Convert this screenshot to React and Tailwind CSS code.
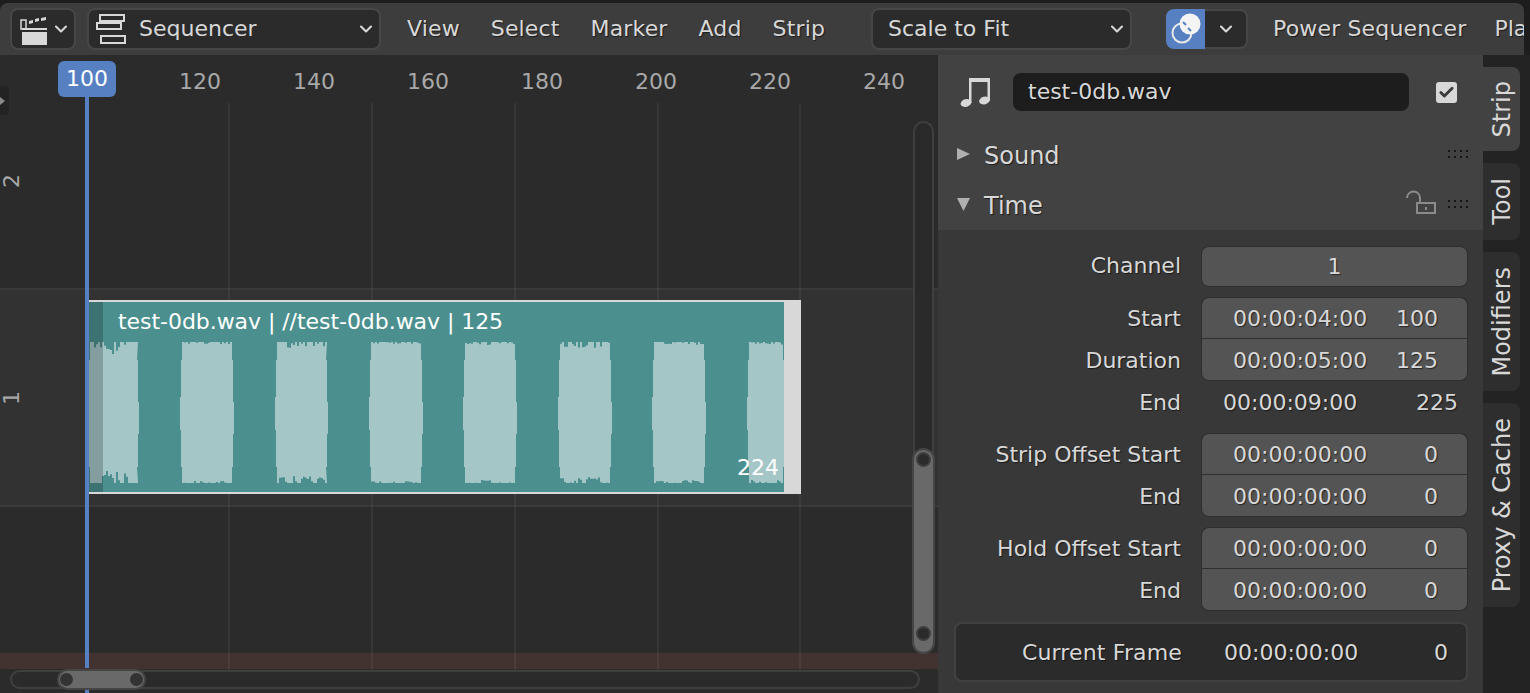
import React from "react";
import { ChevronDown, Check } from "lucide-react";

const shadow = "[text-shadow:1px_1px_1px_rgba(0,0,0,0.55)]";
const ticks = [120, 140, 160, 180, 200, 220, 240];
const gridLines = [228, 371, 514, 657, 799];
const blocks = [
  [1, 50, 12],
  [93, 145, 2],
  [188, 239, 7],
  [282, 334, 2],
  [376, 428, 3],
  [471, 523, 6],
  [565, 617, 3],
  [660, 696, 3],
];

// stepped outline of one sound burst, coordinates are inside the strip body
const burstPath = ([x0, x1, spike], index) => {
  const noise = (n) => Math.abs(Math.sin(n * 12.9898 + index * 78.233) * 43758.5453) % 1;
  const top = [];
  const bottom = [];
  const topY = (x) => (noise(x) > 0.55 ? 40 + noise(x + 3) * spike : 40);
  const bottomY = (x) => (noise(x + 7) > 0.55 ? 181 - noise(x + 9) * spike : 181);
  for (let x = x0 + 1; x < x1 - 1; x += 2) {
    top.push(`L${x} ${topY(x)} L${x + 2} ${topY(x)}`);
    bottom.push(`L${x + 2} ${bottomY(x)} L${x} ${bottomY(x)}`);
  }
  return [
    ...top.map((s, i) => (i === 0 ? s.replace("L", "M") : s)),
    `L${x1 - 1} 58`,
    `L${x1} 58`,
    `L${x1} 100`,
    `L${x1 + 1} 100`,
    `L${x1 + 1} 132`,
    `L${x1} 132`,
    `L${x1} 165`,
    `L${x1 - 1} 165`,
    ...bottom.reverse(),
    `L${x0 + 1} 165`,
    `L${x0} 165`,
    `L${x0} 128`,
    `L${x0 - 1} 128`,
    `L${x0 - 1} 95`,
    `L${x0} 95`,
    `L${x0} 58`,
    `L${x0 + 1} 58`,
    "Z",
  ].join(" ");
};

const Dots = () => (
  <svg width="22" height="10" viewBox="0 0 22 10" className="shrink-0">
    {[0, 6, 12, 18].map((x) =>
      [0, 6].map((y) => <rect key={`${x}-${y}`} x={x} y={y + 1} width="2" height="2" fill="#161616" />)
    )}
  </svg>
);

const Clapper = () => (
  <svg width="28" height="32" viewBox="0 0 28 32">
    <rect x="1" y="7" width="5" height="9" fill="none" stroke="#d8d8d8" strokeWidth="1.5" />
    <path d="M9 8l4-1v3l-4 1zM15 6l4-1v3l-4 1zM21 5l5-1v3l-5 1z" fill="#d8d8d8" />
    <rect x="2" y="15" width="25" height="2" fill="#d8d8d8" />
    <rect x="2" y="19" width="25" height="13" fill="#d8d8d8" />
  </svg>
);

const SequencerIcon = () => (
  <svg width="30" height="30" viewBox="0 0 30 30" fill="none" stroke="#d8d8d8" strokeWidth="2">
    <rect x="4" y="1" width="24" height="6" />
    <rect x="1" y="9" width="24" height="6" />
    <rect x="5" y="22" width="24" height="7" />
  </svg>
);

const OverlayIcon = () => (
  <svg width="32" height="32" viewBox="0 0 32 32">
    <circle cx="12" cy="20" r="9.5" fill="none" stroke="#e8e8e8" strokeWidth="2" />
    <circle cx="20" cy="11" r="10.5" fill="#f4f4f4" />
    <path d="M13 9l3 3M18 15l3 3" stroke="#5680c2" strokeWidth="2" />
  </svg>
);

const MusicIcon = () => (
  <svg width="32" height="30" viewBox="0 0 32 30" fill="#d8d8d8">
    <path d="M10 1h21v23h-2.5V5H12.500v21H10z" />
    <ellipse cx="7" cy="26" rx="5.500" ry="3.800" transform="rotate(-15 7 26)" />
    <ellipse cx="25.500" cy="23.500" rx="5.500" ry="3.800" transform="rotate(-15 25.500 23.500)" />
  </svg>
);

const LockIcon = () => (
  <svg width="30" height="24" viewBox="0 0 30 24" fill="none" stroke="#8a8a8a" strokeWidth="2">
    <path d="M1 8a6.5 6.5 0 0 1 13 0v5" />
    <rect x="11" y="13" width="18" height="10" />
    <rect x="19" y="17" width="2" height="3" fill="#8a8a8a" stroke="none" />
  </svg>
);

const Chevron = () => <ChevronDown size={20} strokeWidth={2.5} color="#d8d8d8" />;

const Dropdown = ({ className, children }) => (
  <div className={`flex h-[42px] items-center rounded-lg border-2 border-[#474747] bg-[#2b2b2b] ${className}`}>
    {children}
  </div>
);

const FieldBlock = ({ rows }) => (
  <div className="flex flex-col">
    {rows.map((row, i) => (
      <div key={row.label} className="flex h-[42px] items-center">
        <div className={`w-[243px] pt-[2px] text-right ${shadow}`}>{row.label}</div>
        <div
          className={`ml-[20px] flex h-full w-[267px] items-center justify-between border-x border-[#2e2e2e] bg-[#545454] pt-[2px] pr-[29px] pl-[31px] ${i === 0 ? "rounded-t-lg border-t border-b border-b-[#303030]" : "rounded-b-lg border-b"} ${shadow}`}
        >
          <span>{row.time}</span>
          <span>{row.frame}</span>
        </div>
      </div>
    ))}
  </div>
);

const TabLabel = ({ active, className, children }) => (
  <div
    className={`flex w-[37px] items-center justify-center rounded-r-lg ${active ? "bg-[#424242]" : "bg-[#2e2e2e]"} ${className}`}
  >
    <span className="rotate-180 text-[24px] [writing-mode:vertical-rl]">{children}</span>
  </div>
);

const App = () => {
  return (
    <div className="flex h-screen w-full flex-col overflow-hidden bg-[#1d1d1d] font-['DejaVu_Sans',sans-serif] text-[22px] leading-none text-[#d8d8d8]">
      {/* Header */}
      <header className="mt-[3px] mr-[6px] flex h-[52px] shrink-0 items-center overflow-hidden rounded-t-lg bg-[#3d3d3d] pl-[10px]">
        <Dropdown className="w-[66px] shrink-0 justify-between pr-[3px] pl-[8px]">
          <Clapper />
          <Chevron />
        </Dropdown>
        <Dropdown className="ml-[11px] w-[294px] shrink-0 pr-[3px] pl-[7px]">
          <SequencerIcon />
          <span className="ml-[13px] flex-1">Sequencer</span>
          <Chevron />
        </Dropdown>
        <nav className={`ml-[26px] flex shrink-0 gap-[31px] tracking-[0.15px] ${shadow}`}>
          <span>View</span>
          <span>Select</span>
          <span>Marker</span>
          <span>Add</span>
          <span>Strip</span>
        </nav>
        <Dropdown className="ml-[46px] w-[261px] shrink-0 justify-between pr-[3px] pl-[15px]">
          <span>Scale to Fit</span>
          <Chevron />
        </Dropdown>
        <div className="ml-[34px] flex h-[40px] shrink-0">
          <div className="flex w-[39px] items-center justify-center rounded-l-lg bg-[#5680c2]">
            <OverlayIcon />
          </div>
          <div className="flex w-[43px] items-center justify-center rounded-r-lg border-2 border-l-0 border-[#474747] bg-[#2b2b2b]">
            <Chevron />
          </div>
        </div>
        <span className={`ml-[25px] shrink-0 tracking-[0.15px] ${shadow}`}>Power Sequencer</span>
        <span className={`ml-[28px] shrink-0 ${shadow}`}>Pla</span>
      </header>

      <div className="flex min-h-0 flex-1">
        {/* Timeline */}
        <main className="relative w-[938px] shrink-0 overflow-hidden bg-[#2b2b2b]">
          <div className="flex h-[48px] items-center pl-[143px] text-[#a8a8a8]">
            {ticks.map((tick) => (
              <span key={tick} className="w-[114px] shrink-0 pt-[6px] text-center">
                {tick}
              </span>
            ))}
          </div>
          <div className="flex h-[187px] items-start border-b-2 border-[#3a3a3a] pt-[67px] pl-[2px] text-[#a8a8a8]">
            <span className="w-[20px] rotate-[-90deg] text-center">2</span>
          </div>
          <div className="relative flex h-[215px] items-center bg-[#323232] pl-[2px] text-[#a8a8a8]">
            <span className="w-[20px] rotate-[-90deg] text-center">1</span>
          </div>
          <div className="h-[148px] border-t-2 border-[#3a3a3a]" />
          <div className="h-[16px] bg-[#433330]" />

          {gridLines.map((x) => (
            <div
              key={x}
              style={{ left: x }}
              className="absolute top-[48px] bottom-[4px] w-[2px] bg-white/[0.05]"
            />
          ))}

          {/* Strip */}
          <div className="absolute top-[245px] left-[88px] flex h-[194px] w-[713px] border-y-2 border-[#d8d8d8] text-white">
            <div className="relative flex-1 bg-[#4b8f8e]">
              <svg width="696" height="190" viewBox="0 0 696 190" className="absolute top-0 left-0">
                {blocks.map((block, i) => (
                  <path key={i} d={burstPath(block, i)} fill="#a5c6c7" />
                ))}
              </svg>
              <div className="absolute inset-y-0 left-0 w-[15px] bg-black/20" />
              <span className="absolute top-[9px] left-[30px] tracking-[-0.05px]">test-0db.wav | //test-0db.wav | 125</span>
              <span className="absolute right-[5px] bottom-[13px]">224</span>
            </div>
            <div className="w-[17px] bg-[#d8d8d8]" />
          </div>

          {/* Playhead */}
          <div className="absolute top-[42px] bottom-[25px] left-[85px] w-[4px] bg-[#5680c2]" />
          <div className="absolute bottom-0 left-[85px] h-[3px] w-[4px] bg-[#5680c2]" />
          <div className="absolute top-[6px] left-[58px] flex h-[36px] w-[58px] items-center justify-center rounded-md bg-[#5680c2] text-white">
            100
          </div>

          {/* Sidebar toggle */}
          <div className="absolute top-[31px] left-0 flex h-[29px] w-[9px] items-center rounded-r bg-[#232323]">
            <svg width="6" height="10" viewBox="0 0 6 10">
              <path d="M0 1l5 4-5 4z" fill="#8a8a8a" />
            </svg>
          </div>

          {/* Vertical scrollbar */}
          <div className="absolute top-[66px] bottom-[40px] left-[913px] w-[21px] rounded-full border-2 border-[#3f3f3f] bg-[#2a2a2a]">
            <div className="absolute top-[327px] right-[-1px] bottom-[-1px] left-[-1px] flex flex-col items-center justify-between rounded-full bg-[#696969] px-[2px] pt-[2px] pb-[11px] ring-2 ring-[#454545]">
              <div className="h-[15px] w-[15px] rounded-full border-2 border-[#3f3f3f] bg-[#2b2b2b]" />
              <div className="h-[15px] w-[15px] rounded-full border-2 border-[#3f3f3f] bg-[#2b2b2b]" />
            </div>
          </div>

          {/* Horizontal scrollbar */}
          <div className="absolute bottom-[4px] left-[10px] h-[19px] w-[910px] rounded-full border-2 border-[#3f3f3f] bg-[#2b2b2b]">
            <div className="absolute top-[-1px] bottom-[-1px] left-[47px] flex w-[85px] items-center justify-between rounded-full bg-[#696969] px-[1px] ring-2 ring-[#454545]">
              <div className="h-[13px] w-[13px] rounded-full bg-[#333]" />
              <div className="h-[13px] w-[13px] rounded-full bg-[#333]" />
            </div>
          </div>
        </main>

        {/* Sidebar */}
        <aside className="flex w-[545px] shrink-0 flex-col bg-[#383838]">
          <div className="flex h-[175px] shrink-0 flex-col bg-[#424242]">
            <div className="flex h-[74px] items-center pl-[21px]">
              <MusicIcon />
              <div className={`ml-[22px] flex h-[38px] w-[396px] items-center rounded-lg bg-[#1d1d1d] pl-[15px] ${shadow}`}>
                test-0db.wav
              </div>
              <div className="ml-[27px] flex h-[21px] w-[21px] items-center justify-center rounded-[3px] bg-[#d8d8d8]">
                <Check size={17} strokeWidth={4} color="#3a3a3a" />
              </div>
            </div>
            <div className="flex h-[50px] items-center pl-[19px]">
              <svg width="14" height="14" viewBox="0 0 14 14">
                <path d="M0 1l13 6-13 6z" fill="#b0b0b0" />
              </svg>
              <span className={`ml-[13px] flex-1 pt-[4px] text-[24px] ${shadow}`}>Sound</span>
              <span className="mr-[13px]">
                <Dots />
              </span>
            </div>
            <div className="flex h-[50px] items-center pl-[18px]">
              <svg width="14" height="14" viewBox="0 0 14 14">
                <path d="M1 1h13l-6.5 13z" fill="#b0b0b0" />
              </svg>
              <span className={`ml-[14px] flex-1 pt-[4px] text-[24px] ${shadow}`}>Time</span>
              <span className="mb-[4px]">
                <LockIcon />
              </span>
              <span className="mr-[13px] ml-[12px]">
                <Dots />
              </span>
            </div>
          </div>

          <div className="flex flex-1 flex-col pt-[15px] pr-[15px]">
            <div className="flex h-[42px] items-center">
              <div className={`w-[243px] text-right ${shadow}`}>Channel</div>
              <div className={`ml-[20px] flex h-[41px] w-[267px] items-center justify-center self-end rounded-lg border border-[#2e2e2e] bg-[#545454] ${shadow}`}>
                1
              </div>
            </div>

            <div className="mt-[10px]" />
            <FieldBlock
              rows={[
                { label: "Start", time: "00:00:04:00", frame: "100" },
                { label: "Duration", time: "00:00:05:00", frame: "125" },
              ]}
            />
            <div className="flex h-[42px] items-center pt-[2px]">
              <div className={`w-[243px] text-right ${shadow}`}>End</div>
              <div className={`ml-[20px] flex w-[267px] justify-between pr-[10px] pl-[22px] ${shadow}`}>
                <span>00:00:09:00</span>
                <span>225</span>
              </div>
            </div>

            <div className="mt-[10px]" />
            <FieldBlock
              rows={[
                { label: "Strip Offset Start", time: "00:00:00:00", frame: "0" },
                { label: "End", time: "00:00:00:00", frame: "0" },
              ]}
            />
            <div className="mt-[10px]" />
            <FieldBlock
              rows={[
                { label: "Hold Offset Start", time: "00:00:00:00", frame: "0" },
                { label: "End", time: "00:00:00:00", frame: "0" },
              ]}
            />

            <div className="mt-[11px] ml-[16px] flex h-[60px] items-center rounded-lg border-2 border-[#414141] bg-[#2b2b2b] pt-[2px]">
              <div className={`w-[226px] text-right tracking-[0.15px] ${shadow}`}>Current Frame</div>
              <div className={`ml-[42px] flex flex-1 justify-between pr-[18px] ${shadow}`}>
                <span>00:00:00:00</span>
                <span>0</span>
              </div>
            </div>
          </div>
        </aside>

        {/* Tabs */}
        <nav className="flex flex-1 flex-col gap-[12px] bg-[#232323] pt-[12px]">
          <TabLabel active className="h-[84px]">Strip</TabLabel>
          <TabLabel className="h-[77px]">Tool</TabLabel>
          <TabLabel className="h-[139px]">Modifiers</TabLabel>
          <TabLabel className="h-[204px]">Proxy &amp; Cache</TabLabel>
        </nav>
      </div>
    </div>
  );
};

export default App;
